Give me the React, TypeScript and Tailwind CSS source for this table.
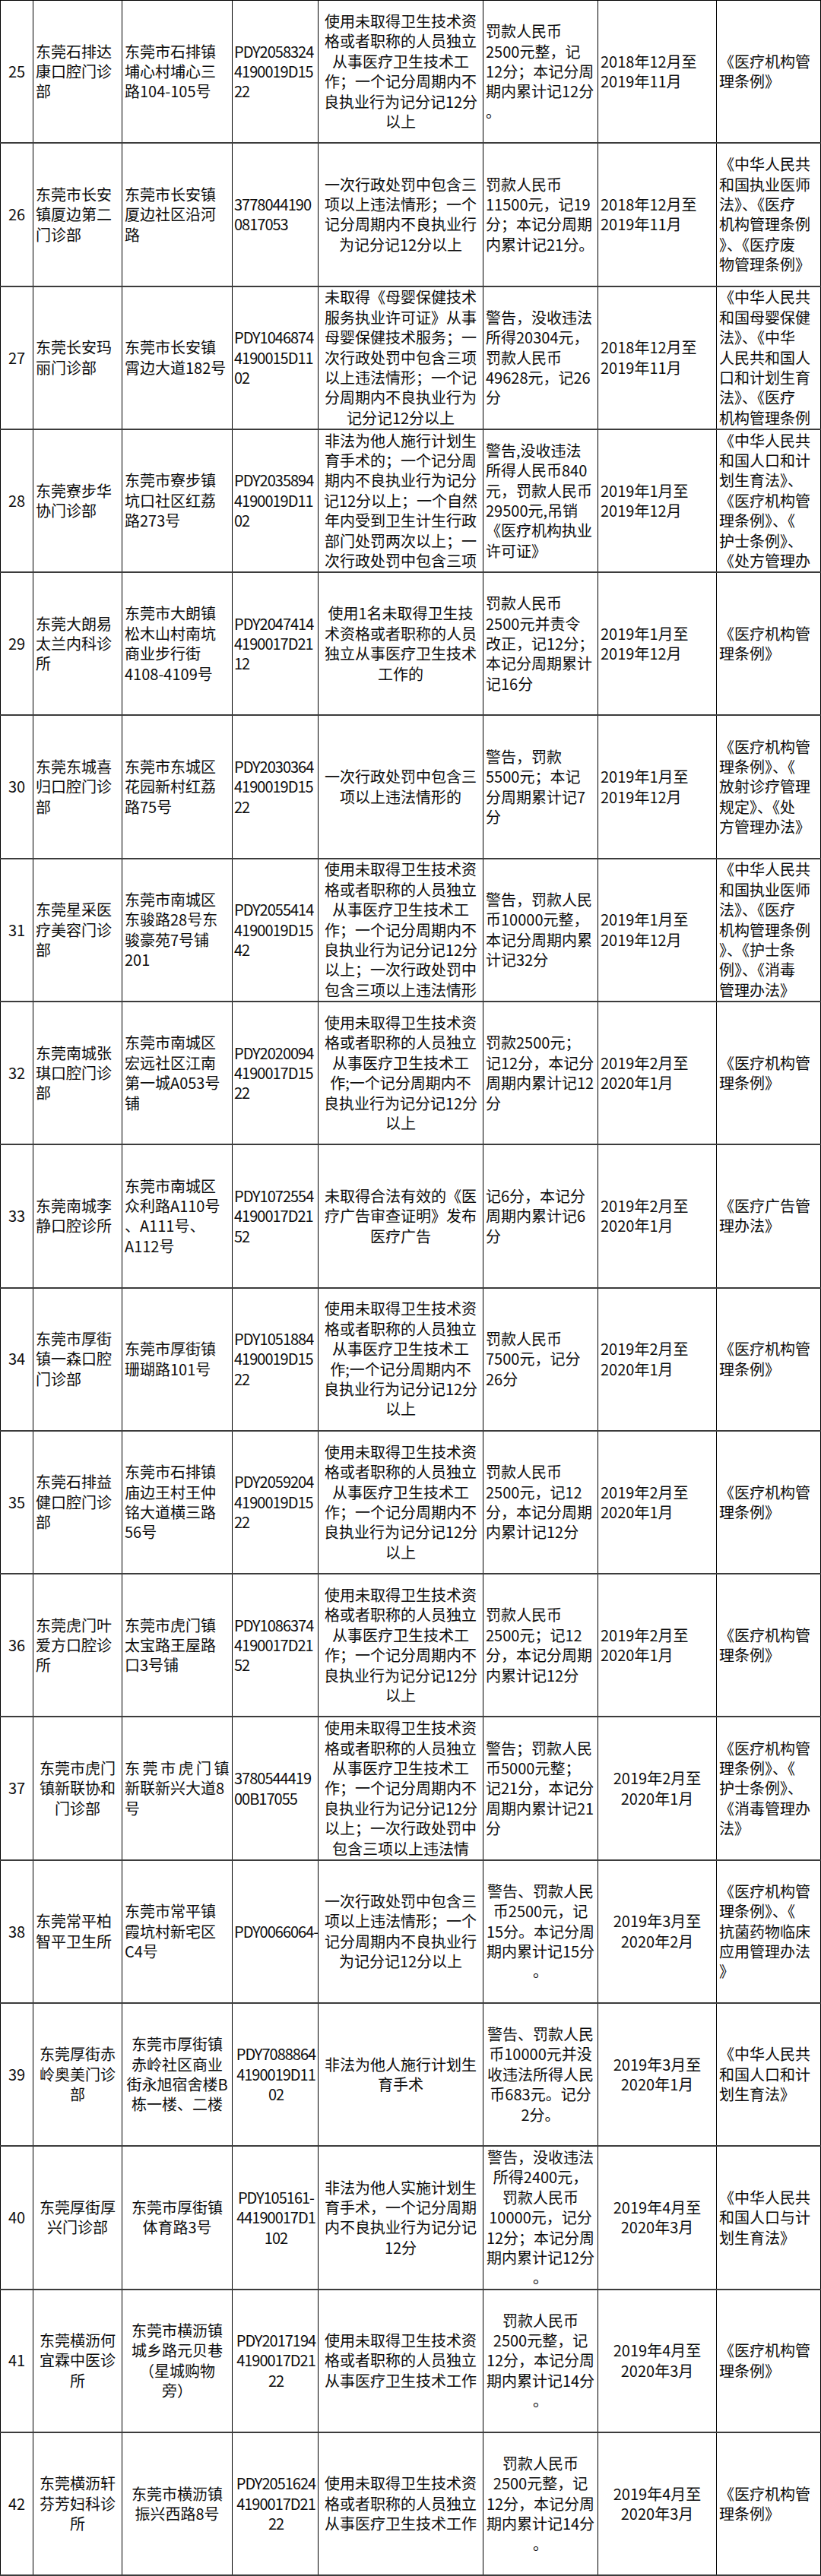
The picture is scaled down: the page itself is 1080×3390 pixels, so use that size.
const widths = ["w-[44px]", "w-[117px]", "w-[145px]", "w-[113px]", "w-[217px]", "w-[151px]", "w-[156px]", "w-[137px]"];

type Row = { cells: string[]; align: string };

// cells: no | name | address | licence | violation | penalty | period | law
// lines are split on "/", align: L = left, C = centre, one letter per column
const rows: Row[] = [
  {
    align: "CLLLCLLL",
    cells: [
      "25",
      "东莞石排达/康口腔门诊/部",
      "东莞市石排镇/埔心村埔心三/路104-105号",
      "PDY2058324/4190019D15/22",
      "使用未取得卫生技术资/格或者职称的人员独立/从事医疗卫生技术工/作；一个记分周期内不/良执业行为记分记12分/以上",
      "罚款人民币/2500元整，记/12分；本记分周/期内累计记12分/。",
      "2018年12月至/2019年11月",
      "《医疗机构管/理条例》",
    ],
  },
  {
    align: "CLLLCLLL",
    cells: [
      "26",
      "东莞市长安/镇厦边第二/门诊部",
      "东莞市长安镇/厦边社区沿河/路",
      "3778044190/0817053",
      "一次行政处罚中包含三/项以上违法情形；一个/记分周期内不良执业行/为记分记12分以上",
      "罚款人民币/11500元，记19/分；本记分周期/内累计记21分。",
      "2018年12月至/2019年11月",
      "《中华人民共/和国执业医师/法》、《医疗/机构管理条例/》、《医疗废/物管理条例》",
    ],
  },
  {
    align: "CLLLCLLL",
    cells: [
      "27",
      "东莞长安玛/丽门诊部",
      "东莞市长安镇/霄边大道182号",
      "PDY1046874/4190015D11/02",
      "未取得《母婴保健技术/服务执业许可证》从事/母婴保健技术服务；一/次行政处罚中包含三项/以上违法情形；一个记/分周期内不良执业行为/记分记12分以上",
      "警告，没收违法/所得20304元，/罚款人民币/49628元，记26/分",
      "2018年12月至/2019年11月",
      "《中华人民共/和国母婴保健/法》、《中华/人民共和国人/口和计划生育/法》、《医疗/机构管理条例",
    ],
  },
  {
    align: "CLLLCLLL",
    cells: [
      "28",
      "东莞寮步华/协门诊部",
      "东莞市寮步镇/坑口社区红荔/路273号",
      "PDY2035894/4190019D11/02",
      "非法为他人施行计划生/育手术的；一个记分周/期内不良执业行为记分/记12分以上；一个自然/年内受到卫生计生行政/部门处罚两次以上；一/次行政处罚中包含三项",
      "警告,没收违法/所得人民币840/元，罚款人民币/29500元,吊销/《医疗机构执业/许可证》",
      "2019年1月至/2019年12月",
      "《中华人民共/和国人口和计/划生育法》、/《医疗机构管/理条例》、《/护士条例》、/《处方管理办",
    ],
  },
  {
    align: "CLLLCLLL",
    cells: [
      "29",
      "东莞大朗易/太兰内科诊/所",
      "东莞市大朗镇/松木山村南坑/商业步行街/4108-4109号",
      "PDY2047414/4190017D21/12",
      "使用1名未取得卫生技/术资格或者职称的人员/独立从事医疗卫生技术/工作的",
      "罚款人民币/2500元并责令/改正，记12分；/本记分周期累计/记16分",
      "2019年1月至/2019年12月",
      "《医疗机构管/理条例》",
    ],
  },
  {
    align: "CLLLCLLL",
    cells: [
      "30",
      "东莞东城喜/归口腔门诊/部",
      "东莞市东城区/花园新村红荔/路75号",
      "PDY2030364/4190019D15/22",
      "一次行政处罚中包含三/项以上违法情形的",
      "警告，罚款/5500元；本记/分周期累计记7/分",
      "2019年1月至/2019年12月",
      "《医疗机构管/理条例》、《/放射诊疗管理/规定》、《处/方管理办法》",
    ],
  },
  {
    align: "CLLLCLLL",
    cells: [
      "31",
      "东莞星采医/疗美容门诊/部",
      "东莞市南城区/东骏路28号东/骏豪苑7号铺/201",
      "PDY2055414/4190019D15/42",
      "使用未取得卫生技术资/格或者职称的人员独立/从事医疗卫生技术工/作；一个记分周期内不/良执业行为记分记12分/以上；一次行政处罚中/包含三项以上违法情形",
      "警告，罚款人民/币10000元整，/本记分周期内累/计记32分",
      "2019年1月至/2019年12月",
      "《中华人民共/和国执业医师/法》、《医疗/机构管理条例/》、《护士条/例》、《消毒/管理办法》",
    ],
  },
  {
    align: "CLLLCLLL",
    cells: [
      "32",
      "东莞南城张/琪口腔门诊/部",
      "东莞市南城区/宏远社区江南/第一城A053号/铺",
      "PDY2020094/4190017D15/22",
      "使用未取得卫生技术资/格或者职称的人员独立/从事医疗卫生技术工/作;一个记分周期内不/良执业行为记分记12分/以上",
      "罚款2500元；/记12分，本记分/周期内累计记12/分",
      "2019年2月至/2020年1月",
      "《医疗机构管/理条例》",
    ],
  },
  {
    align: "CLLLCLLL",
    cells: [
      "33",
      "东莞南城李/静口腔诊所",
      "东莞市南城区/众利路A110号/、A111号、/A112号",
      "PDY1072554/4190017D21/52",
      "未取得合法有效的《医/疗广告审查证明》发布/医疗广告",
      "记6分，本记分/周期内累计记6/分",
      "2019年2月至/2020年1月",
      "《医疗广告管/理办法》",
    ],
  },
  {
    align: "CLLLCLLL",
    cells: [
      "34",
      "东莞市厚街/镇一森口腔/门诊部",
      "东莞市厚街镇/珊瑚路101号",
      "PDY1051884/4190019D15/22",
      "使用未取得卫生技术资/格或者职称的人员独立/从事医疗卫生技术工/作;一个记分周期内不/良执业行为记分记12分/以上",
      "罚款人民币/7500元，记分/26分",
      "2019年2月至/2020年1月",
      "《医疗机构管/理条例》",
    ],
  },
  {
    align: "CLLLCLLL",
    cells: [
      "35",
      "东莞石排益/健口腔门诊/部",
      "东莞市石排镇/庙边王村王仲/铭大道横三路/56号",
      "PDY2059204/4190019D15/22",
      "使用未取得卫生技术资/格或者职称的人员独立/从事医疗卫生技术工/作；一个记分周期内不/良执业行为记分记12分/以上",
      "罚款人民币/2500元，记12/分，本记分周期/内累计记12分",
      "2019年2月至/2020年1月",
      "《医疗机构管/理条例》",
    ],
  },
  {
    align: "CLLLCLLL",
    cells: [
      "36",
      "东莞虎门叶/爱方口腔诊/所",
      "东莞市虎门镇/太宝路王屋路/口3号铺",
      "PDY1086374/4190017D21/52",
      "使用未取得卫生技术资/格或者职称的人员独立/从事医疗卫生技术工/作；一个记分周期内不/良执业行为记分记12分/以上",
      "罚款人民币/2500元；记12/分，本记分周期/内累计记12分",
      "2019年2月至/2020年1月",
      "《医疗机构管/理条例》",
    ],
  },
  {
    align: "CCLLCLCL",
    cells: [
      "37",
      "东莞市虎门/镇新联协和/门诊部",
      "~东莞市虎门镇/新联新兴大道8/号",
      "3780544419/00B17055",
      "使用未取得卫生技术资/格或者职称的人员独立/从事医疗卫生技术工/作；一个记分周期内不/良执业行为记分记12分/以上；一次行政处罚中/包含三项以上违法情",
      "警告；罚款人民/币5000元整；/记21分，本记分/周期内累计记21/分",
      "2019年2月至/2020年1月",
      "《医疗机构管/理条例》、《/护士条例》、/《消毒管理办/法》",
    ],
  },
  {
    align: "CLLLCCCL",
    cells: [
      "38",
      "东莞常平柏/智平卫生所",
      "东莞市常平镇/霞坑村新宅区/C4号",
      "PDY0066064-",
      "一次行政处罚中包含三/项以上违法情形；一个/记分周期内不良执业行/为记分记12分以上",
      "警告、罚款人民/币2500元，记/15分。本记分周/期内累计记15分/。",
      "2019年3月至/2020年2月",
      "《医疗机构管/理条例》、《/抗菌药物临床/应用管理办法/》",
    ],
  },
  {
    align: "CCCCCCCL",
    cells: [
      "39",
      "东莞厚街赤/岭奥美门诊/部",
      "东莞市厚街镇/赤岭社区商业/街永旭宿舍楼B/栋一楼、二楼",
      "PDY7088864/4190019D11/02",
      "非法为他人施行计划生/育手术",
      "警告、罚款人民/币10000元并没/收违法所得人民/币683元。记分/2分。",
      "2019年3月至/2020年1月",
      "《中华人民共/和国人口和计/划生育法》",
    ],
  },
  {
    align: "CCCCCCCL",
    cells: [
      "40",
      "东莞厚街厚/兴门诊部",
      "东莞市厚街镇/体育路3号",
      "PDY105161-/44190017D1/102",
      "非法为他人实施计划生/育手术，一个记分周期/内不良执业行为记分记/12分",
      "警告，没收违法/所得2400元，/罚款人民币/10000元，记分/12分；本记分周/期内累计记12分/。",
      "2019年4月至/2020年3月",
      "《中华人民共/和国人口与计/划生育法》",
    ],
  },
  {
    align: "CCCCCCCL",
    cells: [
      "41",
      "东莞横沥何/宜霖中医诊/所",
      "东莞市横沥镇/城乡路元贝巷/（星城购物/旁）",
      "PDY2017194/4190017D21/22",
      "使用未取得卫生技术资/格或者职称的人员独立/从事医疗卫生技术工作",
      "罚款人民币/2500元整，记/12分，本记分周/期内累计记14分/。",
      "2019年4月至/2020年3月",
      "《医疗机构管/理条例》",
    ],
  },
  {
    align: "CCCCCCCL",
    cells: [
      "42",
      "东莞横沥轩/芬芳妇科诊/所",
      "东莞市横沥镇/振兴西路8号",
      "PDY2051624/4190017D21/22",
      "使用未取得卫生技术资/格或者职称的人员独立/从事医疗卫生技术工作",
      "罚款人民币/2500元整，记/12分，本记分周/期内累计记14分/。",
      "2019年4月至/2020年3月",
      "《医疗机构管/理条例》",
    ],
  },
];

function Cell({ text, align, col }: { text: string; align: string; col: number }) {
  const lines = text.split("/");
  return (
    <div
      className={`${widths[col]} flex shrink-0 flex-col justify-center overflow-hidden border-r border-black px-[3px] ${
        col === 0 ? "border-l" : ""
      } ${align === "C" ? "items-center text-center" : "items-start text-left"} ${
        col === 3 ? "tracking-[-0.05em] pl-[2px] pr-0" : ""
      }`}
    >
      {lines.map((line, i) =>
        line.startsWith("~") ? (
          <div key={i} className="whitespace-nowrap tracking-[3.5px]">
            {line.slice(1)}
          </div>
        ) : (
          <div key={i} className="whitespace-nowrap">
            {line}
          </div>
        )
      )}
    </div>
  );
}

export default function App() {
  return (
    <div
      className="flex h-[3390px] w-[1080px] flex-col overflow-hidden border-t border-black bg-white text-[20px] leading-[26.4px] text-[#0d0d0d]"
      style={{ fontFamily: '"Noto Sans CJK SC", "Noto Sans", sans-serif' }}
    >
      {rows.map((row) => (
        <div key={row.cells[0]} className="flex min-h-0 flex-1 border-b-2 border-[#3c3c3c]">
          {row.cells.map((text, col) => (
            <Cell key={col} text={text} align={row.align[col]} col={col} />
          ))}
        </div>
      ))}
    </div>
  );
}
